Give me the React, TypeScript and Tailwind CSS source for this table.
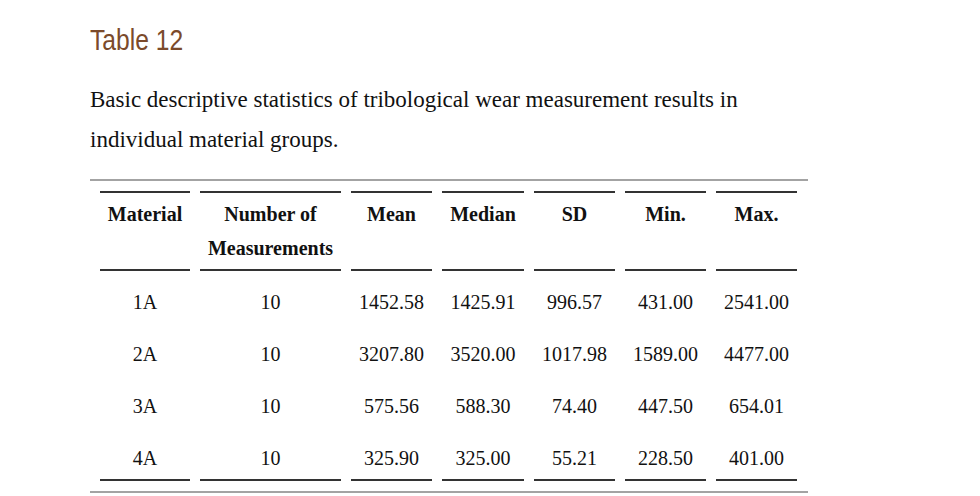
const headers = [
  { label: "Material", w: "w-[90px]" },
  { label: "Number of Measurements", w: "w-[141px]" },
  { label: "Mean", w: "w-[81px]" },
  { label: "Median", w: "w-[82px]" },
  { label: "SD", w: "w-[81px]" },
  { label: "Min.", w: "w-[81px]" },
  { label: "Max.", w: "w-[81px]" },
];

const rows = [
  ["1A", "10", "1452.58", "1425.91", "996.57", "431.00", "2541.00"],
  ["2A", "10", "3207.80", "3520.00", "1017.98", "1589.00", "4477.00"],
  ["3A", "10", "575.56", "588.30", "74.40", "447.50", "654.01"],
  ["4A", "10", "325.90", "325.00", "55.21", "228.50", "401.00"],
];

export default function App() {
  return (
    <div className="w-[980px] h-[496px] overflow-hidden bg-white pl-[90px] pt-[22px]">
      <h2 className="origin-left scale-x-[0.85] text-[29px] leading-[36px] text-[#7b4a2b] [font-family:'Liberation_Sans',Arial,sans-serif]">
        Table 12
      </h2>
      <p className="mt-[22px] w-[700px] text-[23px] leading-[40px] text-[#111] [font-family:'Liberation_Serif',serif]">
        Basic descriptive statistics of tribological wear measurement results in
        individual material groups.
      </p>
      <div className="mt-[19px] w-[718px] border-y-2 border-[#a3a3a3]">
        <table className="border-separate border-spacing-[10px] text-[20px] text-[#111] [font-family:'Liberation_Serif',serif]">
          <thead>
            <tr>
              {headers.map((h) => (
                <th
                  key={h.label}
                  className={`${h.w} border-y-2 border-[#333] py-[4px] align-top text-center font-bold leading-[34px]`}
                >
                  {h.label}
                </th>
              ))}
            </tr>
          </thead>
          <tbody>
            {rows.map((r, i) => (
              <tr key={r[0]}>
                {r.map((c, j) => (
                  <td
                    key={j}
                    className={`py-[4px] text-center leading-[34px] ${
                      i === rows.length - 1 ? "border-b-2 border-[#333]" : ""
                    }`}
                  >
                    {c}
                  </td>
                ))}
              </tr>
            ))}
          </tbody>
        </table>
      </div>
    </div>
  );
}
